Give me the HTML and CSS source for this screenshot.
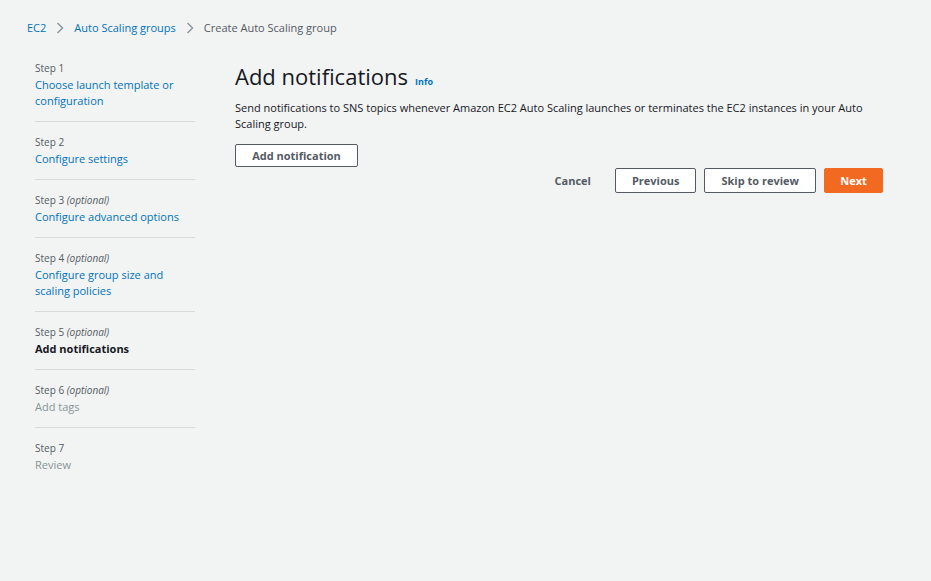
FILE: index.html
```html
<!DOCTYPE html>
<html lang="en">
<head>
<meta charset="utf-8">
<title>Create Auto Scaling group</title>
<link rel="stylesheet" href="styles.css">
</head>
<body>
<nav class="breadcrumbs">
  <a class="crumb-link" href="#">EC2</a>
  <svg class="crumb-sep" width="8" height="12" viewBox="0 0 8 12"><path d="M1.5 1 L6.5 6 L1.5 11" fill="none" stroke="#879596" stroke-width="1.4"/></svg>
  <a class="crumb-link" href="#">Auto Scaling groups</a>
  <svg class="crumb-sep" width="8" height="12" viewBox="0 0 8 12"><path d="M1.5 1 L6.5 6 L1.5 11" fill="none" stroke="#879596" stroke-width="1.4"/></svg>
  <span class="crumb-current">Create Auto Scaling group</span>
</nav>
<div class="layout">
  <ol class="steps">
    <li class="step">
      <div class="step-label">Step 1</div>
      <a class="step-link" href="#">Choose launch template or configuration</a>
    </li>
    <li class="step">
      <div class="step-label">Step 2</div>
      <a class="step-link" href="#">Configure settings</a>
    </li>
    <li class="step">
      <div class="step-label">Step 3 <i>(optional)</i></div>
      <a class="step-link" href="#">Configure advanced options</a>
    </li>
    <li class="step">
      <div class="step-label">Step 4 <i>(optional)</i></div>
      <a class="step-link" href="#">Configure group size and scaling policies</a>
    </li>
    <li class="step">
      <div class="step-label">Step 5 <i>(optional)</i></div>
      <span class="step-active">Add notifications</span>
    </li>
    <li class="step">
      <div class="step-label">Step 6 <i>(optional)</i></div>
      <span class="step-disabled">Add tags</span>
    </li>
    <li class="step step-last">
      <div class="step-label">Step 7</div>
      <span class="step-disabled">Review</span>
    </li>
  </ol>
  <main class="content">
    <div class="title-row">
      <h1 class="title">Add notifications</h1>
      <a class="info" href="#">Info</a>
    </div>
    <p class="desc">Send notifications to SNS topics whenever Amazon EC2 Auto Scaling launches or terminates the EC2 instances in your Auto Scaling group.</p>
    <button class="btn btn-add">Add notification</button>
    <div class="actions">
      <button class="btn-link">Cancel</button>
      <button class="btn btn-normal">Previous</button>
      <button class="btn btn-normal">Skip to review</button>
      <button class="btn btn-primary">Next</button>
    </div>
  </main>
</div>
</body>
</html>
```
FILE: styles.css
```css
* { box-sizing: border-box; }
html, body {
  margin: 0;
  padding: 0;
  background: #f2f3f3;
  font-family: "Open Sans", "Noto Sans", sans-serif;
  color: #16191f;
  height: 100%;
}
a { text-decoration: none; }

.breadcrumbs {
  display: flex;
  align-items: center;
  padding: 20px 0 0 27px;
  font-size: 11px;
  line-height: 16px;
  gap: 10px;
}
.crumb-link { color: #0073bb; }
.crumb-current { color: #545b64; }
.crumb-sep { display: block; }

.layout {
  display: flex;
  padding: 24px 48px 0 35px;
  gap: 40px;
}

.steps {
  list-style: none;
  margin: 0;
  padding: 0;
  width: 160px;
  flex: none;
}
.step {
  padding: 0 0 12px;
  border-bottom: 1px solid #d5dbdb;
  margin-bottom: 12px;
}
.step-last { border-bottom: none; }
.step-label {
  font-size: 10px;
  line-height: 16px;
  color: #545b64;
  margin-bottom: 1px;
}
.step-label i { font-style: italic; }
.step-link, .step-active, .step-disabled {
  display: block;
  font-size: 11px;
  line-height: 16px;
}
.step-link { color: #0073bb; }
.step-active { color: #16191f; font-weight: 700; }
.step-disabled { color: #879596; }

.content {
  flex: 1;
  display: flex;
  flex-direction: column;
  align-items: flex-start;
}
.title-row {
  display: flex;
  align-items: baseline;
  gap: 7px;
  margin-top: 2px;
}
.title {
  margin: 0;
  font-size: 22px;
  line-height: 28px;
  font-weight: 400;
  color: #16191f;
}
.info {
  font-size: 9px;
  font-weight: 700;
  color: #0073bb;
}
.desc {
  margin: 10px 0 12px;
  font-size: 11px;
  line-height: 16px;
  color: #16191f;
}

.btn {
  font-family: inherit;
  font-size: 11px;
  font-weight: 700;
  line-height: 15px;
  border-radius: 2px;
  cursor: pointer;
}
.btn-add {
  width: 123px;
  height: 23px;
  border: 1px solid #545b64;
  background: #fff;
  color: #545b64;
  padding: 0;
}
.actions {
  align-self: stretch;
  display: flex;
  justify-content: flex-end;
  align-items: center;
  gap: 8px;
  margin-top: 1px;
}
.btn-link {
  font-family: inherit;
  font-size: 11px;
  font-weight: 700;
  color: #545b64;
  background: none;
  border: none;
  padding: 0 16px;
  height: 25px;
}
.btn-normal {
  height: 25px;
  padding: 0 16px;
  border: 1px solid #545b64;
  background: #fff;
  color: #545b64;
}
.btn-primary {
  height: 25px;
  width: 59px;
  padding: 0;
  border: 1px solid #f26a21;
  background: #f26a21;
  color: #fff;
}
```
